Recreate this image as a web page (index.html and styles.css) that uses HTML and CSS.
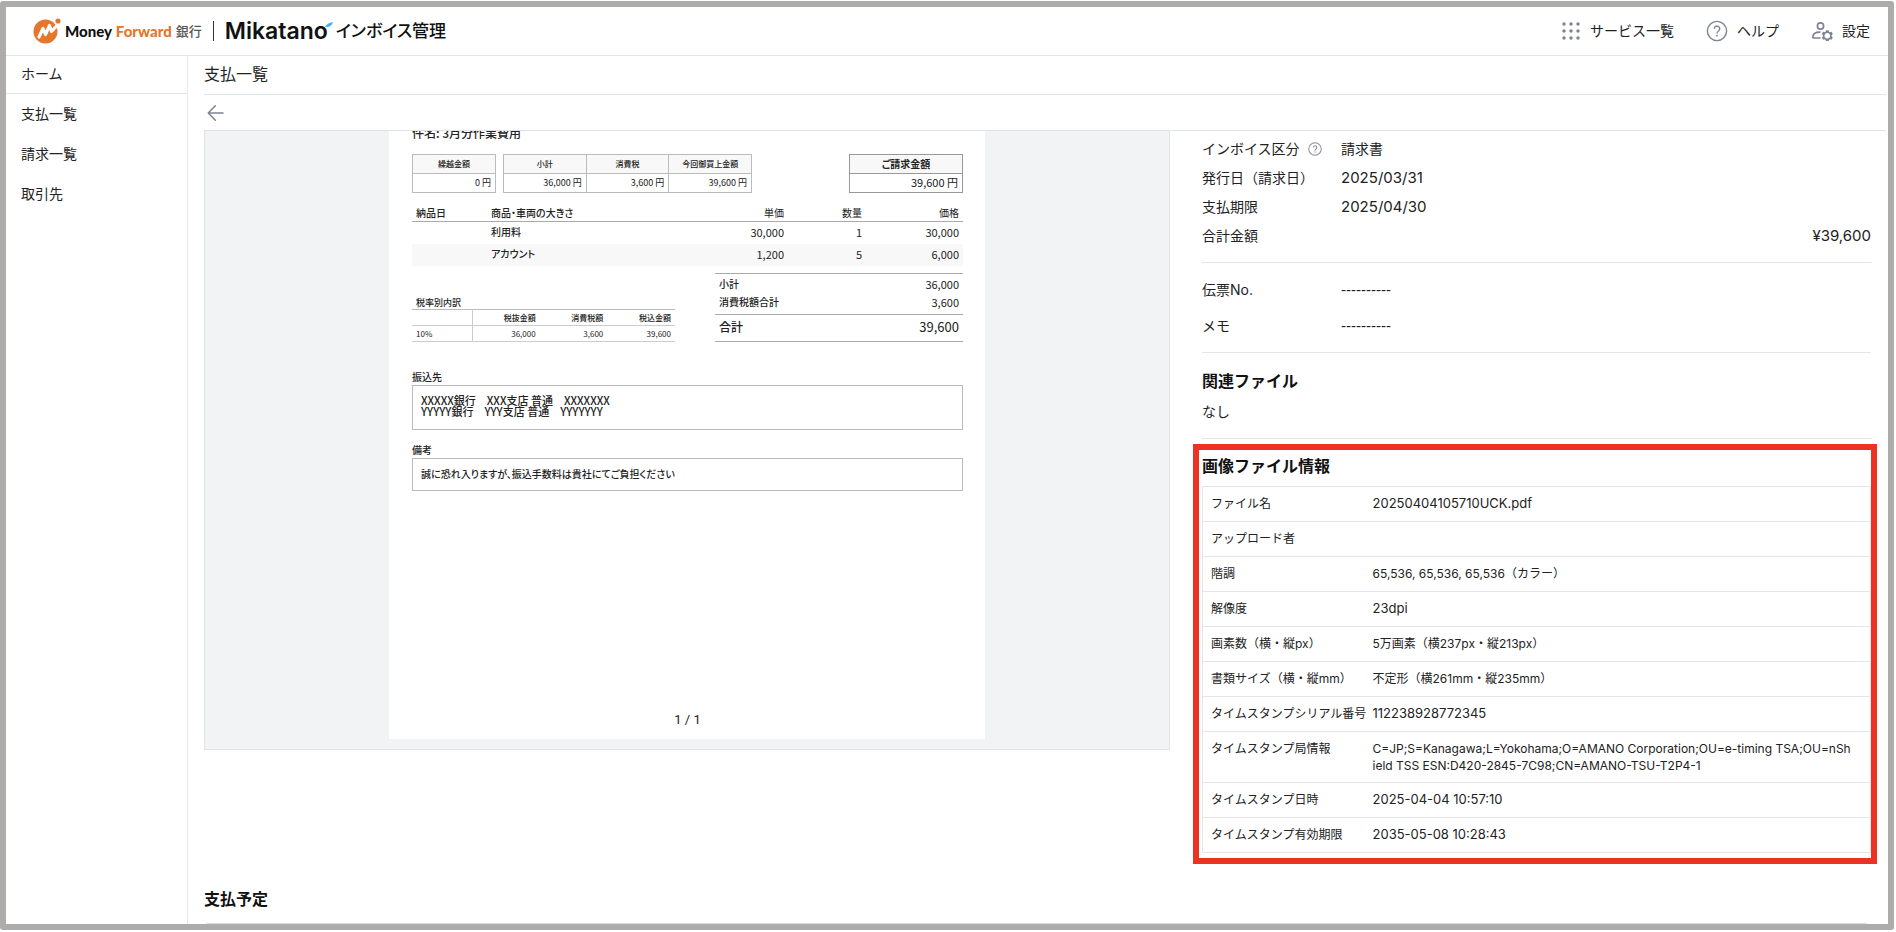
FILE: index.html
```html
<!DOCTYPE html>
<html lang="ja">
<head>
<meta charset="utf-8">
<title>支払一覧 | Mikatano インボイス管理</title>
<link rel="stylesheet" href="styles.css">
</head>
<body>
<div class="app">
  <header class="header">
    <a class="brand" href="#">
      <svg class="brand-mark" viewBox="0 0 28 26" aria-hidden="true">
        <circle cx="12.500" cy="13.500" r="12" fill="#e5762b"/>
        <circle cx="25" cy="3" r="2.600" fill="#e5762b"/>
        <path d="M6 19 L10 10.500 L12.500 16.500 L16.500 7.500 L18.500 13.500 L24 7.500" fill="none" stroke="#fff" stroke-width="3.200" stroke-linejoin="round" stroke-linecap="round"/>
      </svg>
      <span class="brand-bank"><b>Money</b> <b class="brand-orange">Forward</b></span>
      <span class="brand-ginko">銀行</span>
      <span class="brand-bar"></span>
      <span class="brand-product">Mikatano<svg class="brand-tick" viewBox="0 0 8 5" aria-hidden="true"><path d="M0 5 Q2 1 8 0 Q7 4 3 5 Z" fill="#46b1f2"/></svg></span>
      <span class="brand-name">インボイス管理</span>
    </a>
    <nav class="header-nav">
      <button class="nav-button" type="button">
        <svg width="20" height="20" viewBox="0 0 20 20" fill="#7f8494" aria-hidden="true"><circle cx="3" cy="3" r="1.700"/><circle cx="10" cy="3" r="1.700"/><circle cx="17" cy="3" r="1.700"/><circle cx="3" cy="10" r="1.700"/><circle cx="10" cy="10" r="1.700"/><circle cx="17" cy="10" r="1.700"/><circle cx="3" cy="17" r="1.700"/><circle cx="10" cy="17" r="1.700"/><circle cx="17" cy="17" r="1.700"/></svg>
        サービス一覧
      </button>
      <button class="nav-button" type="button">
        <svg width="22" height="22" viewBox="0 0 22 22" fill="none" stroke="#7f8494" stroke-width="1.400" aria-hidden="true"><circle cx="11" cy="11" r="9.600"/><path d="M8.300 8.800 a2.700 2.700 0 1 1 4.200 2.200 c-1 .7-1.500 1.100-1.500 2.400"/><circle cx="11" cy="15.700" r=".9" fill="#7f8494" stroke="none"/></svg>
        ヘルプ
      </button>
      <button class="nav-button" type="button">
        <svg width="22" height="20" viewBox="0 0 22 20" fill="none" stroke="#7f8494" stroke-width="1.700" aria-hidden="true"><circle cx="9.500" cy="5" r="3.100"/><path d="M9.500 11.200 C5 11 2 12.800 1.800 16 Q1.800 17 2.800 17 H9.500"/><path fill="#7f8494" fill-rule="evenodd" stroke="none" d="M15 9.200 h2.600 l.4 1.500 1 .6 1.500-.5 1.300 2.300 -1.100 1.100 v1.200 l1.100 1.100 -1.300 2.300 -1.500-.5 -1 .6 -.4 1.500 H15 l-.4-1.500 -1-.6 -1.500 .5 -1.300-2.300 1.100-1.100 v-1.200 l-1.100-1.100 1.300-2.300 1.500 .5 1-.6z M16.300 12 a2.800 2.800 0 1 0 .01 0z"/></svg>
        設定
      </button>
    </nav>
  </header>

  <div class="body">
    <nav class="sidebar">
      <a class="side-link side-home" href="#">ホーム</a>
      <a class="side-link" href="#">支払一覧</a>
      <a class="side-link" href="#">請求一覧</a>
      <a class="side-link" href="#">取引先</a>
    </nav>

    <main class="main">
      <h1 class="title">支払一覧</h1>
      <div class="toolbar">
        <button class="back" type="button" aria-label="戻る">
          <svg width="18" height="18" viewBox="0 0 18 18" fill="none" stroke="#7f8494" stroke-width="1.500" stroke-linecap="round" stroke-linejoin="round" aria-hidden="true"><path d="M16 9 H1.500 M8.400 1.800 L1.200 9 L8.400 16.200"/></svg>
        </button>
      </div>

      <div class="scroll">
        <div class="columns">
          <section class="viewer" aria-label="請求書プレビュー">
            <article class="page">
              <p class="subject">件名: 3月分作業費用</p>
              <div class="summary">
                <table class="box-table one">
                  <thead><tr><th>繰越金額</th></tr></thead>
                  <tbody><tr><td>0 円</td></tr></tbody>
                </table>
                <table class="box-table three">
                  <thead><tr><th>小計</th><th>消費税</th><th>今回御買上金額</th></tr></thead>
                  <tbody><tr><td>36,000 円</td><td>3,600 円</td><td>39,600 円</td></tr></tbody>
                </table>
                <table class="box-table grand">
                  <thead><tr><th>ご請求金額</th></tr></thead>
                  <tbody><tr><td>39,600 円</td></tr></tbody>
                </table>
              </div>

              <table class="items">
                <colgroup><col class="c-date"><col><col class="c-price"><col class="c-qty"><col class="c-amount"></colgroup>
                <thead><tr><th>納品日</th><th>商品・車両の大きさ</th><th class="num">単価</th><th class="num">数量</th><th class="num">価格</th></tr></thead>
                <tbody>
                  <tr><td></td><td>利用料</td><td class="num">30,000</td><td class="num">1</td><td class="num">30,000</td></tr>
                  <tr class="stripe"><td></td><td>アカウント</td><td class="num">1,200</td><td class="num">5</td><td class="num">6,000</td></tr>
                </tbody>
              </table>

              <div class="sums">
                <table class="tax">
                  <caption>税率別内訳</caption>
                  <thead><tr><th></th><th>税抜金額</th><th>消費税額</th><th>税込金額</th></tr></thead>
                  <tbody><tr><td>10%</td><td>36,000</td><td>3,600</td><td>39,600</td></tr></tbody>
                </table>
                <table class="totals">
                  <tbody>
                    <tr class="subtotal"><th>小計</th><td>36,000</td></tr>
                    <tr class="tax-total"><th>消費税額合計</th><td>3,600</td></tr>
                    <tr class="total"><th>合計</th><td>39,600</td></tr>
                  </tbody>
                </table>
              </div>

              <h2 class="note-title">振込先</h2>
              <p class="note note-bank">XXXXX銀行　XXX支店 普通　XXXXXXX<br>YYYYY銀行　YYY支店 普通　YYYYYYY</p>
              <h2 class="note-title">備考</h2>
              <p class="note">誠に恐れ入りますが、振込手数料は貴社にてご負担ください</p>
              <p class="pager">1 / 1</p>
            </article>
          </section>

          <section class="detail">
            <dl class="fields">
              <dt>インボイス区分
                <svg width="14" height="14" viewBox="0 0 22 22" fill="none" stroke="#8b8f9c" stroke-width="1.600" aria-hidden="true"><circle cx="11" cy="11" r="9.800"/><path d="M8.300 8.800 a2.700 2.700 0 1 1 4.200 2.200 c-1 .7-1.500 1.100-1.500 2.400"/><circle cx="11" cy="15.700" r="1" fill="#8b8f9c" stroke="none"/></svg>
              </dt><dd>請求書</dd>
              <dt>発行日（請求日）</dt><dd class="figure">2025/03/31</dd>
              <dt>支払期限</dt><dd class="figure">2025/04/30</dd>
              <dt>合計金額</dt><dd class="figure amount">¥39,600</dd>
            </dl>
            <dl class="fields memo">
              <dt>伝票No.</dt><dd class="empty">----------</dd>
              <dt>メモ</dt><dd class="empty">----------</dd>
            </dl>
            <section class="related">
              <h2 class="heading">関連ファイル</h2>
              <p class="none">なし</p>
            </section>
            <section class="file-info">
              <h2 class="heading">画像ファイル情報</h2>
              <table class="info">
                <tbody>
                  <tr><th scope="row">ファイル名</th><td class="figure">20250404105710UCK.pdf</td></tr>
                  <tr><th scope="row">アップロード者</th><td></td></tr>
                  <tr><th scope="row">階調</th><td>65,536, 65,536, 65,536（カラー）</td></tr>
                  <tr><th scope="row">解像度</th><td class="figure">23dpi</td></tr>
                  <tr><th scope="row">画素数（横・縦px）</th><td>5万画素（横237px・縦213px）</td></tr>
                  <tr><th scope="row">書類サイズ（横・縦mm）</th><td>不定形（横261mm・縦235mm）</td></tr>
                  <tr><th scope="row">タイムスタンプシリアル番号</th><td class="figure">112238928772345</td></tr>
                  <tr><th scope="row">タイムスタンプ局情報</th><td class="break">C=JP;S=Kanagawa;L=Yokohama;O=AMANO Corporation;OU=e-timing TSA;OU=nSh<br>ield TSS ESN:D420-2845-7C98;CN=AMANO-TSU-T2P4-1</td></tr>
                  <tr><th scope="row">タイムスタンプ日時</th><td class="figure">2025-04-04 10:57:10</td></tr>
                  <tr><th scope="row">タイムスタンプ有効期限</th><td class="figure">2035-05-08 10:28:43</td></tr>
                </tbody>
              </table>
            </section>
          </section>
        </div>

        <section class="plan">
          <h2 class="heading">支払予定</h2>
          <div class="plan-box"></div>
        </section>
      </div>
    </main>
  </div>
</div>
</body>
</html>
```

FILE: styles.css
```css
* {
  box-sizing: border-box;
}

body {
  margin: 0;
  padding: 1px 2px 2px 0;
  height: 100vh;
  background: #fff;
  color: #222;
  font-family: Inter, "Noto Sans CJK JP", sans-serif;
  font-size: 14px;
  line-height: 20px;
}

h1, h2, p, dl, dd {
  margin: 0;
}

table {
  border-collapse: collapse;
}

button {
  border: 0;
  padding: 0;
  background: none;
  color: inherit;
  font: inherit;
}

a {
  color: inherit;
  text-decoration: none;
}

.app {
  display: flex;
  flex-direction: column;
  height: 100%;
  border: 6px solid #adacaa;
  border-radius: 3px;
  overflow: hidden;
}

/* Header */

.header {
  display: flex;
  align-items: center;
  justify-content: space-between;
  flex: none;
  height: 49px;
  padding: 0 18px 1px 27px;
  border-bottom: 1px solid #e3e7e8;
}

.brand {
  display: flex;
  align-items: center;
  color: #111;
  white-space: nowrap;
}

.brand-mark {
  width: 28px;
  height: 26px;
}

.brand-bank {
  margin-left: 4px;
  font-family: Lato, sans-serif;
  font-size: 15px;
}

.brand-bank b {
  font-weight: 900;
}

.brand-bank .brand-orange {
  color: #e5762b;
}

.brand-ginko {
  margin-left: 4px;
  color: #555;
  font-size: 13px;
  font-weight: 500;
}

.brand-bar {
  width: 1px;
  height: 20px;
  margin: 0 11px;
  background: #333;
}

.brand-product {
  position: relative;
  font-size: 23px;
  font-weight: 600;
}

.brand-tick {
  position: absolute;
  top: 1px;
  right: -5px;
  width: 8px;
  height: 5px;
}

.brand-name {
  margin-left: 8px;
  font-size: 17px;
  font-weight: 500;
  font-feature-settings: "palt";
}

.header-nav {
  display: flex;
  gap: 32px;
}

.nav-button {
  display: flex;
  align-items: center;
  gap: 9px;
}

/* Sidebar */

.body {
  display: grid;
  grid-template-columns: 182px minmax(0, 1fr);
  flex: 1;
  min-height: 0;
}

.sidebar {
  border-right: 1px solid #e6e8ea;
}

.side-link {
  display: block;
  padding: 10px 15px;
}

.side-home {
  padding: 8px 15px 9px;
  border-bottom: 1px solid #e3e6e8;
}

/* Main */

.main {
  display: flex;
  flex-direction: column;
  min-width: 0;
  min-height: 0;
  padding: 0 2px 0 16px;
}

.title {
  flex: none;
  padding: 6px 0 8px;
  border-bottom: 1px solid #e0e6e6;
  font-size: 16px;
  font-weight: 400;
  line-height: 24px;
}

.toolbar {
  flex: none;
  height: 35px;
  padding: 9px 3px;
}

.back {
  display: block;
}

.scroll {
  flex: 1;
  min-height: 0;
  overflow: hidden;
  border-top: 1px solid #e0e3e5;
}

.columns {
  display: grid;
  grid-template-columns: 966fr 669fr;
  gap: 32px;
  padding-right: 15px;
}

.viewer {
  align-self: start;
  padding-bottom: 10px;
  border: 1px solid #e2e5e8;
  border-top: 0;
  background: #f1f3f5;
  overflow: hidden;
}

/* Invoice page */

.page {
  display: flex;
  flex-direction: column;
  width: 596px;
  min-height: 608px;
  margin: 0 auto;
  padding: 0 22px 11px 23px;
  background: #fff;
  font-family: "Noto Sans CJK JP", sans-serif;
  font-size: 10px;
  font-weight: 500;
  font-feature-settings: "palt";
  line-height: 16px;
}

.page th {
  font-weight: 500;
}

.page .num,
.page .tax td,
.page .totals td {
  font-weight: 400;
}

.subject {
  margin-top: -8px;
  font-size: 12px;
  font-feature-settings: normal;
  line-height: 20px;
}

.summary {
  display: flex;
  gap: 7px;
  margin-top: 11px;
}

.box-table {
  table-layout: fixed;
}

.box-table th,
.box-table td {
  height: 19px;
  padding: 0 4px 1px;
  border: 1px solid #bbb;
  line-height: 15px;
}

.box-table thead th {
  background: #f8f8f8;
  font-size: 8px;
}

.page .box-table td {
  font-size: 9px;
  font-weight: 400;
  text-align: right;
}

.one {
  width: 84px;
}

.three {
  width: 249px;
}

.grand {
  width: 114px;
  margin-left: auto;
  outline: 1px solid #999;
  outline-offset: -1px;
}

.grand th,
.grand td {
  border-color: #999;
}

.grand thead th {
  font-size: 10px;
  font-weight: 700;
}

.page .grand td {
  font-size: 11px;
}

.items {
  width: 100%;
  margin-top: 12px;
  table-layout: fixed;
}

.c-date {
  width: 75px;
}

.c-price {
  width: 90px;
}

.c-qty {
  width: 78px;
}

.c-amount {
  width: 97px;
}

.items th,
.items td {
  height: 22px;
  padding: 0 4px 2px;
  text-align: left;
}

.items th {
  height: 16px;
  padding-bottom: 0;
  border-bottom: 1px solid #aaa;
}

.items .num {
  text-align: right;
}

.items td.num {
  font-size: 11px;
}

.stripe td {
  background: #f8f8f8;
}

.sums {
  display: flex;
  align-items: flex-end;
  justify-content: space-between;
  margin-top: 7px;
}

.tax {
  width: 263px;
  table-layout: fixed;
  border-top: 1px solid #bbb;
  border-bottom: 1px solid #bbb;
  font-size: 8px;
}

.tax caption {
  padding: 0 4px;
  font-size: 9px;
  line-height: 12px;
  text-align: left;
}

.tax th,
.tax td {
  height: 16px;
  padding: 0 4px;
  border-bottom: 1px solid #ccc;
  line-height: 14px;
  text-align: right;
}

.tax th:first-child,
.tax td:first-child {
  width: 60px;
  border-right: 1px solid #ccc;
  text-align: left;
}

.totals {
  width: 248px;
  border-top: 1px solid #aaa;
  border-bottom: 1px solid #aaa;
}

.totals th,
.totals td {
  padding: 0 4px;
  text-align: left;
}

.totals td {
  font-size: 11px;
  text-align: right;
}

.subtotal th,
.subtotal td {
  height: 21px;
}

.totals .tax-total th,
.totals .tax-total td {
  height: 20px;
  padding-bottom: 4px;
}

.totals .total th,
.totals .total td {
  height: 27px;
  padding-bottom: 2px;
  border-top: 1px solid #aaa;
}

.total th {
  font-size: 12px;
}

.totals .total td {
  font-size: 13px;
}

.note-title {
  margin-top: 12px;
  font-size: 10px;
  font-weight: 500;
}

.sums + .note-title {
  margin-top: 27px;
}

.note {
  padding: 7px 8px 8px;
  border: 1px solid #bbb;
}

.note-bank {
  padding: 9px 8px 12px;
  font-size: 11px;
  line-height: 11px;
}

.pager {
  margin-top: auto;
  font-family: Roboto, sans-serif;
  font-size: 13px;
  font-weight: 400;
  text-align: center;
}

/* Detail column */

.detail {
  min-width: 0;
  padding-top: 4px;
}

.fields {
  display: grid;
  grid-template-columns: 139px 1fr;
  align-items: center;
  row-gap: 1px;
  padding-bottom: 12px;
  border-bottom: 1px solid #e3e6e8;
  line-height: 28px;
}

.fields dt {
  display: flex;
  align-items: center;
  gap: 8px;
  white-space: nowrap;
}

.fields .figure {
  font-size: 15px;
}

.fields .empty {
  font-family: "Liberation Sans", sans-serif;
  font-size: 15px;
}

.fields .amount {
  text-align: right;
}

.memo {
  row-gap: 8px;
  padding: 13px 0 12px;
}

.heading {
  color: #111;
  font-size: 16px;
  font-weight: 700;
  line-height: 24px;
}

.related {
  padding: 16px 0 16px;
  border-bottom: 1px solid #e3e6e8;
}

.none {
  margin-top: 9px;
}

.file-info {
  margin: 5px -6px 0 -9px;
  padding: 4px 0 5px 3px;
  border: 6px solid #eb3223;
}

.info {
  width: 100%;
  margin-top: 8px;
  table-layout: fixed;
  font-size: 12px;
  line-height: 17px;
}

.info tr {
  border: 1px solid #e3e6e8;
}

.info th,
.info td {
  height: 35px;
  padding: 8px;
  text-align: left;
  vertical-align: top;
}

.info th {
  width: 162px;
  font-weight: 400;
  white-space: nowrap;
}

.info .figure {
  font-size: 13px;
}

.info .break {
  word-break: break-all;
}

.plan {
  margin-top: 23px;
  padding-right: 17px;
}

.plan-box {
  height: 80px;
  margin-top: 12px;
  border: 1px solid #d9dcdf;
  border-radius: 4px;
}
```
